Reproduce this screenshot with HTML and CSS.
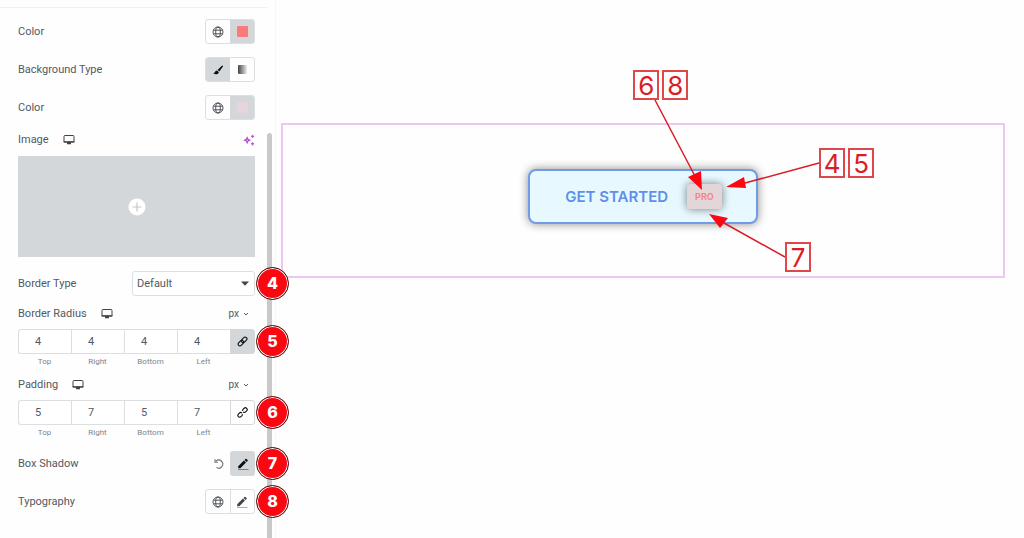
FILE: index.html
```html
<!DOCTYPE html>
<html lang="en">
<head>
<meta charset="utf-8">
<title>Badge style settings</title>
<link rel="stylesheet" href="styles.css">
</head>
<body>
<svg class="sprite" aria-hidden="true">
  <symbol id="globe" viewBox="0 0 12 12"><g fill="none" stroke="currentColor" stroke-width=".9"><circle cx="6" cy="6" r="5"/><ellipse cx="6" cy="6" rx="2.300" ry="5"/><path d="M1.600 4.200h8.800M1.600 7.800h8.800"/></g></symbol>
  <symbol id="screen" viewBox="0 0 12 12"><path d="M2 1.500h8a1 1 0 0 1 1 1v5.500h-10V2.500a1 1 0 0 1 1-1z" fill="none" stroke="currentColor"/><path d="M.6 7.200h10.800v1.400H.6zM4 8.500h4v1.700H4z" fill="currentColor"/></symbol>
  <symbol id="link" viewBox="0 0 12 12"><g fill="none" stroke="currentColor" stroke-width="1.200" transform="rotate(-45 6 6)"><rect x="0" y="4" width="7" height="4" rx="2"/><rect x="5" y="4" width="7" height="4" rx="2"/></g></symbol>
  <symbol id="unlink" viewBox="0 0 12 12"><g fill="none" stroke="currentColor" stroke-width="1.200" transform="rotate(-45 6 6)"><path d="M4.600 7.200A2 2 0 0 1 3.200 8H1.600a2 2 0 0 1-2-2 2 2 0 0 1 2-2h1.600a2 2 0 0 1 2 2M7.400 4.800A2 2 0 0 1 8.800 4h1.600a2 2 0 0 1 2 2 2 2 0 0 1-2 2H8.800a2 2 0 0 1-2-2"/></g></symbol>
  <symbol id="pencil" viewBox="0 0 12 12"><path d="M1.200 8.200 6.900 2.500 9 4.600 3.300 10.300H1.200zM7.500 1.900l1-1q.5-.4 1 0l1.100 1.100q.4.5 0 1l-1 1z" fill="currentColor"/><path d="M1 11.600h10.500" stroke="currentColor" stroke-width=".8" opacity=".6"/></symbol>
  <symbol id="chevron" viewBox="0 0 6 6"><path d="M1 2l2 2 2-2" fill="none" stroke="currentColor"/></symbol>
</svg>
<div class="editor">
  <aside class="sidebar">
    <form class="panel">
      <div class="row">
        <span class="name">Color</span>
        <div class="segment">
          <button type="button" aria-label="Global text color"><svg class="icon"><use href="#globe"/></svg></button>
          <button type="button" class="on" aria-label="Pick text color"><i class="swatch coral"></i></button>
        </div>
      </div>
      <div class="row">
        <span class="name">Background Type</span>
        <div class="segment">
          <label class="choice"><input type="radio" name="bg" aria-label="Classic" checked><svg class="icon" viewBox="0 0 12 12"><path d="M10.800 1.700q.5.500 0 1.100L7.300 7.500 5.600 5.900 9.900 1.700q.5-.4.9 0zM5 6.400l1.800 1.800C6.500 10.600 3.200 11 1 9.200 3 9.200 2.800 6.600 5 6.400z"/></svg></label>
          <label class="choice"><input type="radio" name="bg" aria-label="Gradient"><i class="swatch fade"></i></label>
        </div>
      </div>
      <div class="row">
        <span class="name">Color</span>
        <div class="segment">
          <button type="button" aria-label="Global background color"><svg class="icon"><use href="#globe"/></svg></button>
          <button type="button" class="on" aria-label="Pick background color"><i class="swatch blush"></i></button>
        </div>
      </div>
      <div class="heading">
        <span class="name">Image</span>
        <svg class="icon"><use href="#screen"/></svg>
        <button type="button" class="plain ai" aria-label="Create with AI"><svg class="icon" viewBox="0 0 12 12"><path d="M4.200 3.700 5 5.400 6.700 6.200 5 7 4.200 8.700 3.400 7 1.700 6.200 3.400 5.400z" fill="none" stroke="currentColor" stroke-width="1.300"/><path d="M9.500.8l.5 1.100 1.100.5-1.100.5-.5 1.100L9 2.900l-1.100-.5L9 1.900zM9.500 8.200l.5 1.100 1.100.5-1.100.5-.5 1.100-.5-1.100-1.100-.5L9 9.300z" fill="currentColor" stroke="currentColor" stroke-width=".5"/></svg></button>
      </div>
      <button type="button" class="media" aria-label="Choose image"><svg class="plus" viewBox="0 0 18 18"><circle cx="9" cy="9" r="8.500" fill="#fff"/><path d="M9 4.500v9M4.500 9h9" stroke="#c3c7ca" stroke-width="1.200"/></svg></button>
      <div class="row after-media">
        <label class="name" for="border-type">Border Type</label>
        <div class="select">
          <select id="border-type"><option>Default</option><option>Solid</option></select>
          <svg class="caret" viewBox="0 0 8 5"><path d="M0 .5h8L4 4.700z"/></svg>
        </div>
        <b class="callout">4</b>
      </div>
      <div class="heading group">
        <span class="name">Border Radius</span>
        <svg class="icon"><use href="#screen"/></svg>
        <button type="button" class="plain unit">px <svg class="chev"><use href="#chevron"/></svg></button>
      </div>
      <div class="dims">
        <label><input value="4"><span>Top</span></label>
        <label><input value="4"><span>Right</span></label>
        <label><input value="4"><span>Bottom</span></label>
        <label><input value="4"><span>Left</span></label>
        <div class="tie">
          <button type="button" class="on" aria-label="Unlink values"><svg class="icon"><use href="#link"/></svg></button>
          <b class="callout">5</b>
        </div>
      </div>
      <div class="heading group">
        <span class="name">Padding</span>
        <svg class="icon"><use href="#screen"/></svg>
        <button type="button" class="plain unit">px <svg class="chev"><use href="#chevron"/></svg></button>
      </div>
      <div class="dims">
        <label><input value="5"><span>Top</span></label>
        <label><input value="7"><span>Right</span></label>
        <label><input value="5"><span>Bottom</span></label>
        <label><input value="7"><span>Left</span></label>
        <div class="tie">
          <button type="button" aria-label="Link values"><svg class="icon"><use href="#unlink"/></svg></button>
          <b class="callout">6</b>
        </div>
      </div>
      <div class="row after-dims">
        <span class="name">Box Shadow</span>
        <button type="button" class="plain reset" aria-label="Reset shadow"><svg class="icon" viewBox="0 0 12 12"><path d="M3 3.200A4 4 0 1 1 3.400 9.400M2 1.200v3h3" fill="none" stroke="currentColor" stroke-width="1.100"/></svg></button>
        <button type="button" class="tile on" aria-label="Edit shadow"><svg class="icon"><use href="#pencil"/></svg></button>
        <b class="callout">7</b>
      </div>
      <div class="row">
        <span class="name">Typography</span>
        <div class="segment">
          <button type="button" aria-label="Global font"><svg class="icon"><use href="#globe"/></svg></button>
          <button type="button" class="edge" aria-label="Edit typography"><svg class="icon"><use href="#pencil"/></svg></button>
        </div>
        <b class="callout">8</b>
      </div>
    </form>
    <div class="track"><div class="thumb"></div></div>
  </aside>
  <main class="stage">
    <section class="frame">
      <div class="cta-wrap">
        <button type="button" class="cta">GET STARTED <span class="pro">PRO</span></button>
        <svg class="arrows" viewBox="0 0 346 204" aria-hidden="true">
          <path d="M127 31 168 109M291 94 217 114M257 188 196 154" stroke="#dc1c24" stroke-width="1.500"/>
          <path d="M174 121 160 108 173 102zM198 118 216 108 218 119zM181 145 200 149 192 159z" fill="#fb0712"/>
        </svg>
        <span class="mark m6">6</span>
        <span class="mark m8">8</span>
        <span class="mark m4">4</span>
        <span class="mark m5">5</span>
        <span class="mark m7">7</span>
      </div>
    </section>
  </main>
</div>
</body>
</html>
```
FILE: styles.css
```css
* { box-sizing: border-box; }
body {
  margin: 0;
  background: #fefefe;
  color: #515962;
  font-family: Roboto, sans-serif;
  font-size: 11px;
  line-height: 14px;
}
button, input, select { font: inherit; color: inherit; margin: 0; }
button { padding: 0; border: 0; background: none; }
.sprite { display: none; }
.icon { width: 12px; height: 12px; display: block; color: #3f444b; overflow: visible; }

.editor { display: flex; min-height: 100vh; }
.sidebar {
  display: flex;
  flex: none;
  width: 276px;
  position: relative;
  z-index: 1;
  border-right: 1px solid #f6f6f6;
}
.panel {
  flex: 1;
  margin-top: 7px;
  border-top: 1px solid #f0f0f1;
  padding: 11px 12px 0 18px;
}
.track { flex: none; width: 8px; padding: 133px 3px 0 0; display: flex; }
.thumb { flex: 1; background: #c9c9c9; border-radius: 3px 3px 0 0; }

.row { display: flex; align-items: center; height: 25px; margin-bottom: 13px; position: relative; }
.name { margin-right: auto; }
.segment {
  display: flex;
  width: 50px;
  height: 25px;
  border: 1px solid #dcdfe1;
  border-radius: 3px;
  overflow: hidden;
}
.segment button, .choice {
  flex: 1;
  display: flex;
  align-items: center;
  justify-content: center;
}
.choice input { appearance: none; position: absolute; margin: 0; }
.on, .choice:has(:checked) { background: #d3d7da; }
.choice .icon { fill: #0c0d0e; }
.edge { border-left: 1px solid #dcdfe1; }
.swatch { width: 11px; height: 11px; border-radius: 1px; }
.coral { background: #fb7b7d; }
.blush { background: #e6d5da; }
.fade { width: 9px; height: 9px; background: linear-gradient(90deg, #444, #eee); }

.heading { display: flex; align-items: center; height: 14px; margin-bottom: 9px; }
.heading .name { margin-right: 14px; }
.plain { margin-left: auto; display: flex; align-items: center; }
.ai .icon { color: #b94bd0; }
.media {
  display: flex;
  align-items: center;
  justify-content: center;
  width: 100%;
  height: 101px;
  background: #d3d7da;
}
.plus { width: 18px; height: 18px; }
.after-media { margin: 14px 0 11px; }
.select { width: 123px; position: relative; }
.select select {
  appearance: none;
  display: block;
  width: 100%;
  height: 25px;
  padding: 0 4px;
  border: 1px solid #dcdfe1;
  border-radius: 3px;
  background: #fff;
}
.caret { position: absolute; right: 6px; top: 10px; width: 8px; height: 5px; fill: #3f444b; }

.group { margin-bottom: 8px; }
.unit { font-size: 10px; gap: 4px; margin-right: 6px; }
.chev { width: 6px; height: 6px; }
.dims { display: flex; margin-bottom: 11px; }
.dims label { flex: 1; min-width: 0; text-align: center; font-size: 8px; line-height: 10px; color: #7d848b; }
.dims input {
  display: block;
  width: 100%;
  height: 25px;
  margin-bottom: 3px;
  padding: 0 0 0 16px;
  border: 1px solid #dcdfe1;
  border-right-width: 0;
  background: #fff;
  font-size: 11px;
  color: #515962;
}
.dims label:first-child input { border-radius: 3px 0 0 3px; }
.dims span { display: block; }
.tie { flex: none; width: 25px; height: 25px; position: relative; }
.tie button {
  display: flex;
  align-items: center;
  justify-content: center;
  width: 100%;
  height: 100%;
  border: 1px solid #d3d7da;
  border-radius: 0 3px 3px 0;
}
.tie .icon { width: 11px; height: 11px; color: #0c0d0e; }
.after-dims { margin-top: 13px; }
.reset { margin: 0 5px 0 0; }
.reset .icon { color: #6a7178; }
.tile { display: flex; align-items: center; justify-content: center; width: 25px; height: 25px; border-radius: 3px; }
.tile .icon { color: #0c0d0e; }

.callout {
  position: absolute;
  top: -4px;
  right: -34px;
  width: 33px;
  height: 33px;
  border: 1px solid #4a1416;
  border-radius: 50%;
  background: #fb0712;
  box-shadow: inset 0 0 0 1px #fff;
  color: #fff;
  font: 800 16px/31px Inter, sans-serif;
  text-align: center;
}

.stage { flex: 1; padding: 123px 19px 0 5px; }
.frame {
  display: flex;
  justify-content: center;
  padding: 44px 0 52px;
  border: 2px solid #ebc8f3;
}
.cta-wrap { position: relative; }
.cta {
  display: flex;
  align-items: center;
  gap: 19px;
  height: 55px;
  padding: 0 34px 0 35px;
  border: 2px solid #709be6;
  border-radius: 8px;
  background: #e7f8ff;
  box-shadow: 0 0 10px rgba(0, 0, 0, 0.45);
  color: #5f8fe6;
  font: 600 15px/20px Inter, sans-serif;
}
.pro {
  padding: 5px 8px;
  border-radius: 4px;
  background: #e3d6d8;
  box-shadow: 0 0 8px rgba(0, 0, 0, 0.5);
  color: #f5868b;
  font-size: 9px;
  line-height: 15px;
  font-weight: 700;
}
.arrows { position: absolute; left: 0; top: -100px; width: 346px; height: 204px; }
.mark {
  position: absolute;
  width: 26px;
  height: 30px;
  border: 2px solid #e0474b;
  color: #dc1c24;
  font: 26px/27px Inter, sans-serif;
  text-align: center;
}
.m6 { left: 105px; top: -99px; }
.m8 { left: 134px; top: -99px; }
.m4 { left: 291px; top: -21px; }
.m5 { left: 320px; top: -21px; }
.m7 { left: 257px; top: 73px; }
```
